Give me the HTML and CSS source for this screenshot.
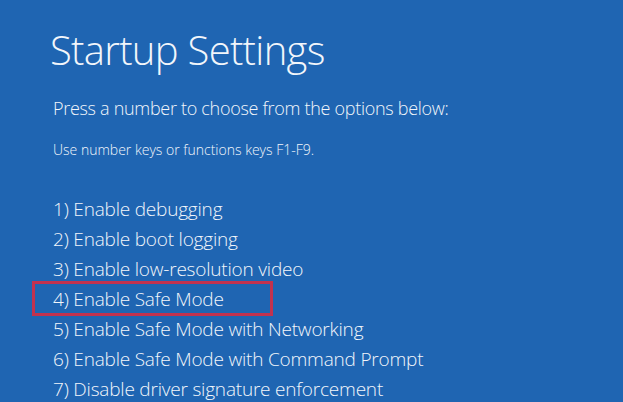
FILE: index.html
```html
<!DOCTYPE html>
<html>
<head>
<meta charset="utf-8">
<link rel="stylesheet" href="styles.css">
</head>
<body>
<div class="screen">
  <h1 class="title">Startup Settings</h1>
  <p class="lead">Press a number to choose from the options below:</p>
  <p class="hint">Use number keys or functions keys F1-F9.</p>
  <ul class="options">
    <li>1) Enable debugging</li>
    <li>2) Enable boot logging</li>
    <li>3) Enable low-resolution video</li>
    <li class="selected">4) Enable Safe Mode</li>
    <li>5) Enable Safe Mode with Networking</li>
    <li>6) Enable Safe Mode with Command Prompt</li>
    <li>7) Disable driver signature enforcement</li>
  </ul>
</div>
</body>
</html>
```
FILE: styles.css
```css
html, body {
  margin: 0;
  padding: 0;
  width: 623px;
  height: 402px;
  overflow: hidden;
  background: #1f65b2;
}
.screen {
  padding: 22px 0 0 50px;
  color: #f2f6fb;
  font-family: "Open Sans", "Noto Sans", sans-serif;
  font-weight: 300;
}
.title {
  margin: 0;
  font-size: 40px;
  font-weight: 300;
  line-height: 56px;
  letter-spacing: -0.7px;
}
.lead {
  margin: 17px 0 0 3px;
  font-size: 18px;
  line-height: 26px;
  letter-spacing: -0.3px;
}
.hint {
  margin: 19px 0 0 3px;
  font-size: 14px;
  line-height: 20px;
}
.options {
  list-style: none;
  margin: 34px 0 0 0;
  padding: 0;
}
.options li {
  font-size: 19px;
  line-height: 30px;
  height: 30px;
  padding-left: 3px;
  letter-spacing: -0.2px;
}
.options li.selected {
  position: relative;
}
.options li.selected::before {
  content: "";
  position: absolute;
  left: -18px;
  top: -3px;
  width: 235px;
  height: 29px;
  border: 3px solid #c2324f;
}
```
